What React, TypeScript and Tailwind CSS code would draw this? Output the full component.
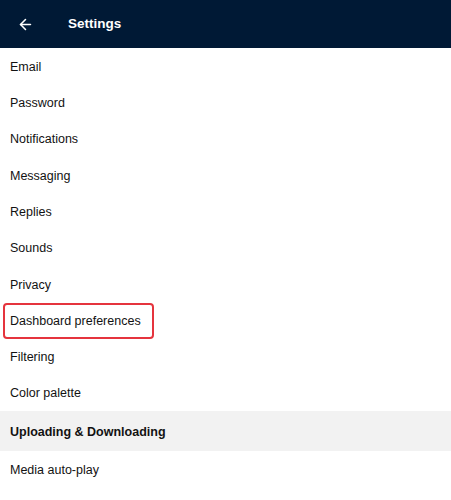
import { ArrowLeft } from 'lucide-react';

const items = [
  'Email',
  'Password',
  'Notifications',
  'Messaging',
  'Replies',
  'Sounds',
  'Privacy',
  'Dashboard preferences',
  'Filtering',
  'Color palette',
];

export default function App() {
  return (
    <div className="w-[451px] h-[500px] overflow-hidden bg-white text-[#121212]" style={{ fontFamily: '"Liberation Sans", Arial, sans-serif' }}>
      <header className="h-[48px] bg-[#001935] flex items-center text-white">
        <div className="w-[68px] flex items-center pl-[17px]">
          <ArrowLeft size={17} strokeWidth={2.2} />
        </div>
        <h1 className="text-[13.5px] font-bold">Settings</h1>
      </header>

      <ul className="relative">
        {items.map((label) => (
          <li key={label} className="relative h-[36.3px] flex items-center px-[10px] pt-[2px] text-[12.5px]">
            {label}
            {label === 'Dashboard preferences' && (
              <span className="absolute left-[3px] top-[1px] w-[151px] h-[36px] border-[2.5px] border-[#e5343d] rounded-[4px]" />
            )}
          </li>
        ))}
        <li className="h-[40px] flex items-center px-[10px] pt-[2px] bg-[#f2f2f2] text-[12.5px] font-bold">
          Uploading &amp; Downloading
        </li>
        <li className="h-[36.3px] flex items-center px-[10px] pt-[2px] text-[12.5px]">Media auto-play</li>
      </ul>
    </div>
  );
}
